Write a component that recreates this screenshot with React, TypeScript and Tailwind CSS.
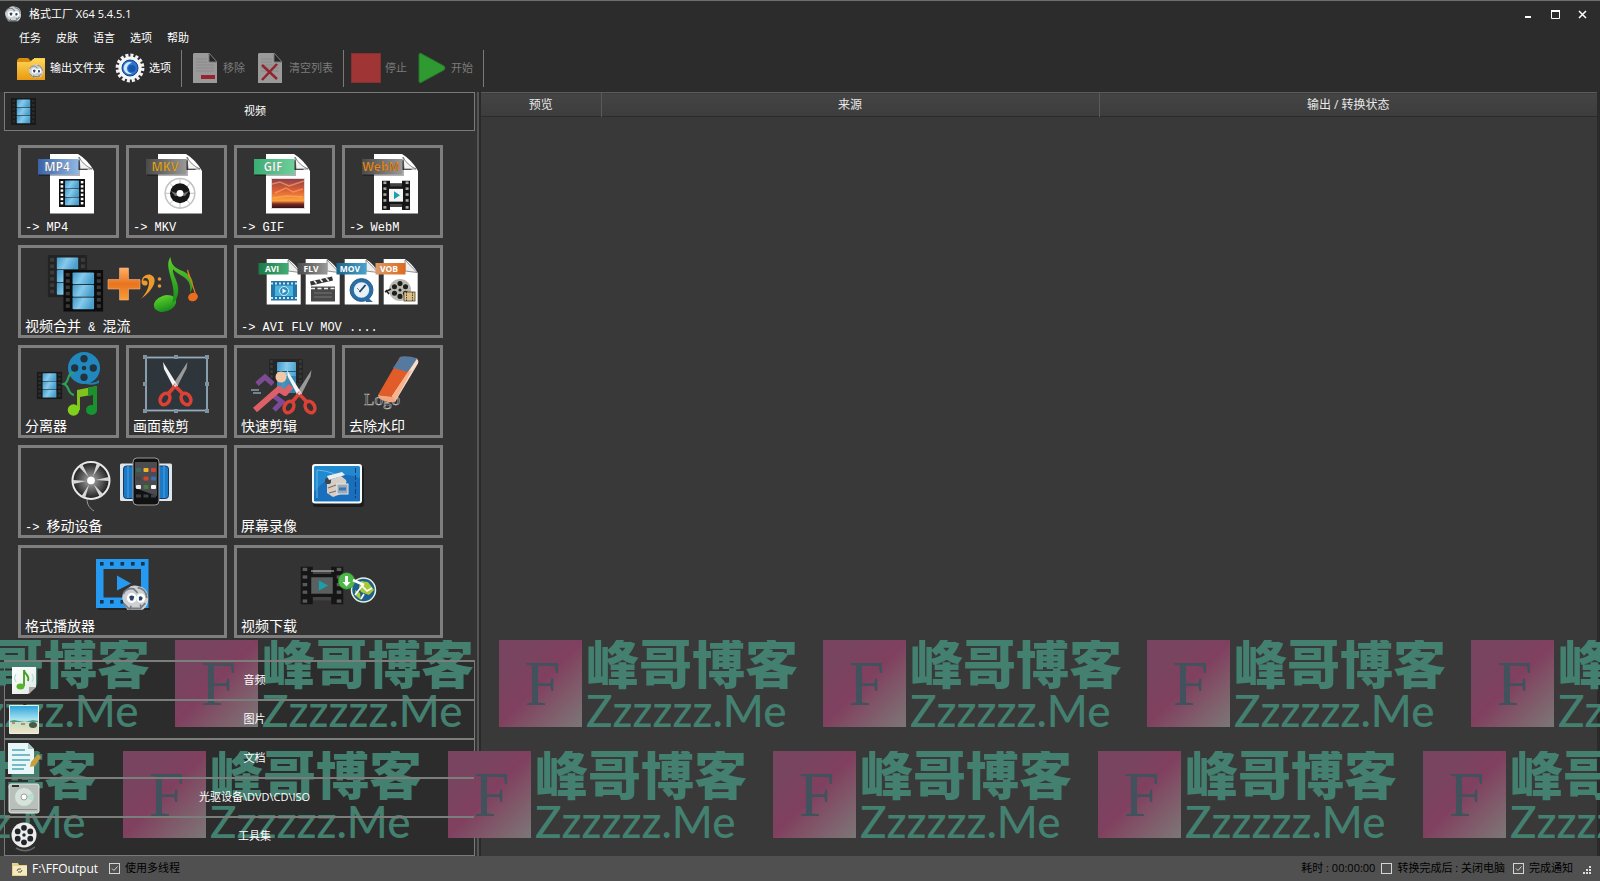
import React, { useState } from 'react';

interface BoxProps {
  x: number;
  y: number;
  w: number;
  h: number;
}

const Gradients: React.FC = () => (
  <svg width="0" height="0" className="absolute" aria-hidden="true">
    <defs>
      <linearGradient id="sky" x1="0" y1="0" x2="1" y2="0.3">
        <stop offset="0" stopColor="#3f98c8" />
        <stop offset="0.5" stopColor="#86caec" />
        <stop offset="1" stopColor="#4a9fcc" />
      </linearGradient>
      <linearGradient id="tagBlue"><stop offset="0" stopColor="#3a62a8" /><stop offset="1" stopColor="#8fb8e6" /></linearGradient>
      <linearGradient id="tagGray"><stop offset="0" stopColor="#4a4a4a" /><stop offset="1" stopColor="#999" /></linearGradient>
      <linearGradient id="tagGreen"><stop offset="0" stopColor="#3aae72" /><stop offset="1" stopColor="#6fcf9b" /></linearGradient>
      <linearGradient id="tagDeep"><stop offset="0" stopColor="#1c7a48" /><stop offset="1" stopColor="#43ad76" /></linearGradient>
      <linearGradient id="tagCyan"><stop offset="0" stopColor="#1d6389" /><stop offset="1" stopColor="#4aa3cf" /></linearGradient>
      <linearGradient id="tagOrange"><stop offset="0" stopColor="#d99a6a" /><stop offset="1" stopColor="#dd6a1e" /></linearGradient>
      <linearGradient id="sunset" x1="0" y1="0" x2="0" y2="1">
        <stop offset="0" stopColor="#8e3f4e" />
        <stop offset="0.4" stopColor="#dd5f38" />
        <stop offset="0.75" stopColor="#ffa23a" />
        <stop offset="0.86" stopColor="#7a2a22" />
        <stop offset="1" stopColor="#31131b" />
      </linearGradient>
      <linearGradient id="leaf" x1="0" y1="0" x2="0" y2="1"><stop offset="0" stopColor="#5bd02b" /><stop offset="1" stopColor="#178a1c" /></linearGradient>
      <linearGradient id="amber" x1="0" y1="0" x2="0" y2="1"><stop offset="0" stopColor="#ffb066" /><stop offset="0.5" stopColor="#e8741f" /><stop offset="1" stopColor="#f6a03a" /></linearGradient>
      <linearGradient id="paper" x1="0" y1="0" x2="1" y2="1"><stop offset="0" stopColor="#fff" /><stop offset="1" stopColor="#dfe8e4" /></linearGradient>
      <radialGradient id="steel"><stop offset="0" stopColor="#fff" /><stop offset="0.25" stopColor="#888" /><stop offset="1" stopColor="#1c1c1c" /></radialGradient>
      <linearGradient id="beach" x1="0" y1="0" x2="0" y2="1"><stop offset="0" stopColor="#2fa4dc" /><stop offset="0.5" stopColor="#a8e4ee" /><stop offset="0.65" stopColor="#c9dfc4" /><stop offset="1" stopColor="#efe3c4" /></linearGradient>
      <linearGradient id="gold" x1="0" y1="0" x2="0" y2="1"><stop offset="0" stopColor="#ffd657" /><stop offset="1" stopColor="#e89a10" /></linearGradient>
    </defs>
  </svg>
);

const Film: React.FC<BoxProps & { frame?: string; hole?: string }> = ({ x, y, w, h, frame = '#111', hole = '#555' }) => (
  <svg x={x} y={y} width={w} height={h} viewBox="0 0 26 28" preserveAspectRatio="none">
    <rect width="26" height="28" fill={frame} />
    {[2, 6.2, 10.4, 14.6, 18.8, 23].map(t => (
      <g key={t} fill={hole}>
        <rect x="1.6" y={t} width="2.6" height="2.4" />
        <rect x="21.8" y={t} width="2.6" height="2.4" />
      </g>
    ))}
    {[1.6, 10, 18.4].map(t => <rect key={t} x="6" y={t} width="14" height="7.9" rx="0.6" fill="url(#sky)" />)}
  </svg>
);

const PlayFrame: React.FC<BoxProps & { screen?: string; hole?: string }> = ({ x, y, w, h, screen = '#f4f4f4', hole = '#a8a8a8' }) => (
  <svg x={x} y={y} width={w} height={h} viewBox="0 0 28 30" preserveAspectRatio="none">
    <path d="M0 0h8v3h12V0h8v30h-8v-3H8v3H0z" fill="#151515" />
    <path d="M8 3h12v3H8zM8 24h12v3H8z" fill="#444" />
    {[1, 7, 13, 19, 26].map(t => (
      <g key={t} fill={hole}>
        <rect x="1.4" y={t} width="3" height="2.6" />
        <rect x="23.6" y={t} width="3" height="2.6" />
      </g>
    ))}
    <rect x="7" y="8.5" width="14" height="13" fill={screen} />
    <path d="M12 11l6 4-6 4z" fill="#19a0ab" />
  </svg>
);

const Reel: React.FC<{ cx: number; cy: number; r: number; body: string; hole: string; holes?: number }> = ({ cx, cy, r, body, hole, holes = 5 }) => (
  <g>
    <circle cx={cx} cy={cy} r={r} fill={body} />
    {Array.from({ length: holes }, (_, i) => {
      const a = (i * 2 * Math.PI) / holes - Math.PI / 2;
      return <circle key={i} cx={cx + Math.cos(a) * r * 0.58} cy={cy + Math.sin(a) * r * 0.58} r={r * 0.23} fill={hole} />;
    })}
    <circle cx={cx} cy={cy} r={r * 0.14} fill={hole} />
  </g>
);

const DocTag: React.FC<{ text: string; tag: string; color?: string; children?: React.ReactNode }> = ({ text, tag, color = '#fff', children }) => (
  <g>
    <path d="M29 6h28q10 6 16 17v42.500H29z" fill="#fff" />
    <path d="M57 12v10h10z" fill="#4a4a4a" />
    <path d="M58 9q4 8 13 12l-12 0z" fill="#f3f3f3" stroke="#555" strokeWidth="0.7" />
    <path d="M18 12h41v16H18z" fill="#000" opacity="0.3" />
    <rect x="17" y="11" width="40.500" height="15.500" fill={`url(#${tag})`} />
    <text x="36" y="23" textAnchor="middle" fontSize="12" fontWeight="700" fill={color} stroke="#222" strokeWidth="0.2">{text}</text>
    {children}
  </g>
);

const SmallDoc: React.FC<{ dx: number; text: string; tag: string; children: React.ReactNode }> = ({ dx, text, tag, children }) => (
  <g transform={`translate(${dx} 0)`}>
    <path d="M29.700 11h21q8 5 13 14v31.500h-34z" fill="#fff" />
    <path d="M51 12v11l12 1.500z" fill="#eee" stroke="#666" strokeWidth="0.700" />
    <rect x="21.500" y="15" width="30" height="11.500" fill={`url(#${tag})`} />
    <text x="35" y="24" textAnchor="middle" fontSize="8.500" fontWeight="700" fill="#fff">{text}</text>
    {children}
  </g>
);

const Scissors: React.FC<{ x: number; y: number }> = ({ x, y }) => (
  <g transform={`translate(${x} ${y})`}>
    <path d="M24.500 0l-1 6.500L13 27l-4-3z" fill="#9a9a9a" />
    <path d="M0 0l1 7 10 19 4-2z" fill="#f3f3f3" />
    <g fill="none" stroke="#dc4136" strokeWidth="3.600">
      <ellipse cx="2" cy="37" rx="4.500" ry="6" transform="rotate(28 2 37)" />
      <ellipse cx="23" cy="37" rx="4.500" ry="6" transform="rotate(-28 23 37)" />
      <path d="M5 32l7-8 8 8" />
    </g>
    <circle cx="12.300" cy="23.500" r="1.300" fill="#ddd" />
  </g>
);

const Ball: React.FC<{ cx: number; cy: number; r: number }> = ({ cx, cy, r }) => (
  <g transform={`translate(${cx} ${cy}) scale(${r / 10})`}>
    <path d="M-9 3a9 8 0 0 1 3-10Q-2-11 3-9q6 1 7 7 1 8-4 11H-6z" fill="#cdd1d3" />
    <path d="M-9-3q2-5 8-4l3 3M2-8q7 1 7 8M-9 4l4 4h9l4-4M-4 9l1-3M5 8l-1-3" stroke="#777c80" strokeWidth="1.300" fill="none" />
    <circle cx="-2.500" cy="0" r="3.800" fill="#fff" />
    <circle cx="4.500" cy="0" r="3.400" fill="#fff" />
    <path d="M-4.500-1q2-2 4 0l-1 3h-2zM3-1q2-1 3 1l-1 2H3z" fill="#2c4468" />
  </g>
);

const Mp4Art = () => (
  <DocTag text="MP4" tag="tagBlue"><Film x={38} y={31} w={26} h={28} hole="#fff" /></DocTag>
);

const MkvArt = () => (
  <DocTag text="MKV" tag="tagGray" color="#e0a526">
    <circle cx="51" cy="45.300" r="14.800" fill="#fff" stroke="#c4c4c4" strokeWidth="1.600" />
    <path d="M51 30.500V60M36 45.300h30M40.500 35L61.500 56M61.500 35L40.500 56" stroke="#c4c4c4" />
    <circle cx="51" cy="45.300" r="10" fill="#171717" />
    <path d="M42 43l5 2 4-2 4 2 5-2-4 5H46z" fill="#6f6f6f" />
    <circle cx="51" cy="45.300" r="3.400" fill="#fff" />
  </DocTag>
);

const GifArt = () => (
  <DocTag text="GIF" tag="tagGreen">
    <rect x="34" y="30" width="34" height="31" fill="#ddd" />
    <rect x="35" y="31" width="32" height="29" fill="url(#sunset)" />
    <path d="M35 36l8-2 9 4 15-5M38 45l11-5 7 4 10-3M36 50l14-2 16 1" stroke="#ffb35e" strokeWidth="1.400" fill="none" opacity="0.6" />
  </DocTag>
);

const WebmArt = () => (
  <DocTag text="WebM" tag="tagGray" color="#e58a22"><PlayFrame x={37} y={32.5} w={28} h={29.5} /></DocTag>
);

const MergeArt = () => (
  <g>
    <Film x={26.7} y={7} w={39.6} h={42.3} frame="#232323" hole="#3c3c3c" />
    <Film x={42.3} y={22} w={40} h={41.700} frame="#0c0c0c" hole="#3a3a3a" />
    <path d="M98.500 20h9v11.500H119v9.500h-11.500V52h-9V41H87v-9.500h11.500z" fill="url(#amber)" stroke="#f5b183" strokeWidth="0.600" />
    <path d="M121 36c-2-6 4-11 9-9 7 3 4 14-10 24 9-10 10-20 5-21-3 0-3 2-2 4 2 0 2 3-2 2z" fill="#eb9a2c" />
    <circle cx="124" cy="35" r="2.600" fill="#eb9a2c" />
    <circle cx="138.500" cy="31" r="1.800" fill="#eb9a2c" />
    <circle cx="138.500" cy="38" r="1.800" fill="#eb9a2c" />
    <ellipse cx="144" cy="55.500" rx="11.500" ry="8" transform="rotate(-18 144 55.500)" fill="url(#leaf)" />
    <path d="M149.500 9c-8 11 8 28 1.500 46l4-3c7-15-4-23-3-31 4 7 20 7 17 24 8-13-2-20-10-23-6-3-9-6-9.500-13z" fill="url(#leaf)" />
    <path d="M166.500 22l9 27M166.500 22l2 8" stroke="#e07a25" strokeWidth="1.200" fill="none" />
    <ellipse cx="172" cy="49" rx="5" ry="4.200" transform="rotate(-20 172 49)" fill="#ea6c1c" />
  </g>
);

const FormatsArt = () => (
  <g>
    <SmallDoc dx={0} text="AVI" tag="tagDeep">
      <rect x="34" y="33" width="26" height="19.500" fill="#2277a8" />
      <path d="M34 35.500h26M34 50h26" stroke="#cfe6f2" strokeWidth="2" strokeDasharray="2 2" />
      <rect x="38" y="37.500" width="18" height="10.500" fill="#49b4dd" />
      <circle cx="47" cy="43" r="4.500" fill="#2f8ec0" stroke="#cbeaf7" />
      <path d="M45.500 40.500l4 2.500-4 2.500z" fill="#fff" />
    </SmallDoc>
    <SmallDoc dx={39} text="FLV" tag="tagGray">
      <rect x="35" y="38.500" width="24" height="15" fill="#484848" />
      <path d="M34 33.500l22-5 1 4-22 5z" fill="#333" />
      <path d="M38 32.500l3 3.500M44 31l3 3.500M50 30l3 3M35 40.500h24" stroke="#eee" strokeWidth="1.600" strokeDasharray="4 2.500" />
      <path d="M38 45h18M38 49h18" stroke="#777" />
    </SmallDoc>
    <SmallDoc dx={78} text="MOV" tag="tagCyan">
      <circle cx="46.500" cy="42" r="9.500" fill="#e7f1f7" stroke="#286fa8" strokeWidth="3.600" />
      <circle cx="46.500" cy="42" r="11.500" fill="none" stroke="#173f6a" strokeWidth="0.800" />
      <path d="M44.500 44l6-7" stroke="#1d3c59" strokeWidth="1.800" />
      <path d="M42 40l3 3" stroke="#6f8796" />
      <path d="M51 48l7 6h-7z" fill="#2a6ca5" />
    </SmallDoc>
    <SmallDoc dx={117} text="VOB" tag="tagOrange">
      <Reel cx={46} cy={42} r={11} body="#b9b9b0" hole="#1e1e1e" holes={6} />
      <path d="M31 44l6-3M32 42l3 4" stroke="#222" strokeWidth="1.600" />
      <rect x="50" y="44" width="11" height="9" fill="#d8c08e" stroke="#554224" strokeWidth="0.800" />
      <path d="M52.500 44v9M58.500 44v9" stroke="#554224" strokeDasharray="1.500 1" />
    </SmallDoc>
  </g>
);

const SplitArt = () => (
  <g>
    <Film x={15.7} y={23.7} w={25.6} h={27.6} frame="#191919" hole="#2f2f2f" />
    <path d="M66 34q8 2 12-2v3q-6 3-13 1z" fill="#1c80b5" />
    <Reel cx={63} cy={20} r={16} body="#2287bd" hole="#1f3340" holes={4} />
    <path d="M53 25c-8 0-4 9-10 11 6 2 3 10 10 11" fill="none" stroke="#2ca35c" strokeWidth="2.200" />
    <path d="M56 42l20-4v8l-17 3v13h-3z" fill="#7fc31c" />
    <path d="M67 39.800l9-1.800v25h-4V47l-5 1z" fill="#1d8f2b" />
    <circle cx="52.500" cy="62" r="5.800" fill="#7fd11c" />
    <ellipse cx="70.500" cy="62" rx="5.500" ry="5" fill="#179430" />
  </g>
);

const CropArt = () => (
  <g>
    <rect x="17" y="9.500" width="61" height="53" fill="#2f363b" stroke="#93abbb" strokeWidth="1.800" />
    {[16, 47, 78].map(px => [9, 36, 63].map(py => (
      (px !== 47 || py !== 36) && <rect key={`${px}-${py}`} x={px - 2} y={py - 2} width="4" height="4" fill="#7d93a3" />
    )))}
    <Scissors x={34} y={14} />
  </g>
);

const QuickCutArt = () => (
  <g>
    <rect x="32" y="11" width="34" height="24" fill="#262626" />
    <path d="M34.500 12v22M63.500 12v22" stroke="#3a3a3a" strokeWidth="2.500" strokeDasharray="3 2" />
    <rect x="40" y="14" width="19" height="31" rx="1" fill="url(#sky)" />
    <path d="M40 23.500h19" stroke="#1e5b7c" />
    <path d="M40 28h19v17H40z" fill="#1f6f9c" opacity="0.6" />
    <path d="M20 36l8-7 8 7" fill="none" stroke="#7d4a94" strokeWidth="5" />
    <path d="M37 48l8 6-8 8" fill="none" stroke="#7d4a9b" strokeWidth="5" />
    <path d="M18 62l24-21 6 4 6-7" fill="none" stroke="#dd6068" strokeWidth="6" strokeLinejoin="round" />
    <circle cx="44" cy="29" r="5.500" fill="#f3c8a6" />
    <path d="M14 42h8M16 45h8" stroke="#bcd3e6" strokeWidth="1.200" />
    <Scissors x={50} y={22} />
  </g>
);

const EraserArt = () => (
  <g>
    <text x="19" y="57" fontSize="17" fill="#222" stroke="#bbb" strokeWidth="0.600" className="font-['Liberation_Serif',serif]">Logo</text>
    <path d="M55 9l17 1-24 39-15-2z" fill="#e25c2a" />
    <path d="M56 8.500q8-1 16 2L63 24l-15-4z" fill="#55799f" />
    <path d="M72 10.500q2 2 1 5L50 54l-3-6z" fill="#f5dccb" />
    <path d="M63 24l4-2-17 31.500-3-5z" fill="#f7b48f" />
    <path d="M33 47l15 2 2 5q-10 1-16-4z" fill="#f3a67d" />
  </g>
);

const MobileArt = () => (
  <g>
    <path d="M66 50c0 8 3 10 7 13" stroke="#999" fill="none" />
    <circle cx="70" cy="32.500" r="18.500" fill="url(#steel)" stroke="#e8e8e8" strokeWidth="2" />
    {[0, 60, 120, 180, 240, 300].map(a => (
      <path key={a} d="M70 28L68 14.500h4z" fill="#d6d6d6" transform={`rotate(${a + 25} 70 32.500)`} />
    ))}
    <circle cx="70" cy="32.500" r="3.800" fill="#fff" />
    <rect x="99" y="15.500" width="52" height="37.500" rx="1.500" fill="#dfe6ea" />
    <rect x="102.500" y="18" width="45" height="32.500" rx="3" fill="#1d79c4" stroke="#123a66" />
    <path d="M107 18v32M143 18v32" stroke="#2f8fd8" strokeWidth="2" />
    <rect x="112" y="10" width="26" height="47" rx="4" fill="#111" stroke="#9a9a9a" />
    <path d="M114 14h22v34l-22-8z" fill="#4a4c50" />
    {['#386a5c', '#e9b82a', '#d6403a', '#444', '#c84a2a', '#3a6fb4', '#eee', '#4b7a3f', '#fff'].map((c, i) => (
      <rect key={i} x={115 + (i % 3) * 7.5} y={20 + Math.floor(i / 3) * 8.5} width="5" height="4" rx="1" fill={c} />
    ))}
    <path d="M115 48h20" stroke="#3c444b" strokeWidth="3" strokeDasharray="5 2.500" />
  </g>
);

const RecordArt = () => (
  <g>
    <rect x="76" y="18" width="51" height="41" rx="3" fill="#1c1c1c" />
    <rect x="75" y="16" width="50" height="39.500" rx="3" fill="#f5fafd" />
    <rect x="77" y="18" width="46" height="35.500" rx="1.500" fill="#2389cf" />
    <path d="M77 44q20-24 46-14v23H77z" fill="#1a6fbd" />
    <path d="M80 22q18 1 30 12M80 50V22" stroke="#63b9ea" fill="none" />
    <path d="M118.500 20v30" stroke="#163e77" strokeDasharray="5 2" />
    <path d="M90 33l14-5 5 4v12l-13 5-6-4z" fill="#d6cfc6" />
    <rect x="88" y="30" width="6" height="6" rx="2" fill="#3b4651" />
    <path d="M90 28l15-4 3 3-16 5z" fill="#eee" />
    <rect x="100" y="36" width="11" height="10" fill="#9aa9b5" stroke="#e5e5e5" />
    <path d="M102 41h7" stroke="#3a77b5" strokeWidth="3" />
    <path d="M91 40l8-3M92 45l7-2" stroke="#8c6b60" strokeWidth="1.200" />
  </g>
);

const PlayerArt = () => (
  <g>
    <path d="M77 60h52v2H77z" fill="#222" />
    <rect x="75" y="11" width="52.500" height="49" fill="#269af0" />
    {[79, 89, 99.500, 110, 120].map(px => (
      <g key={px} fill="#173650">
        <rect x={px} y="14" width="3.600" height="3.600" />
        <rect x={px} y="52" width="3.600" height="3.600" />
      </g>
    ))}
    <rect x="82.500" y="21" width="37.500" height="28.500" fill="#333" />
    <path d="M96 27.500l14 8-14 7z" fill="#269af0" />
    <Ball cx={114} cy={50} r={13} />
  </g>
);

const DownloadArt = () => (
  <g>
    <PlayFrame x={63.5} y={18.5} w={43} h={38} screen="#59605f" hole="#5a5a5a" />
    <path d="M74 23h23" stroke="#ccc" />
    <circle cx="126.500" cy="42" r="12" fill="#1f5f8f" stroke="#e5f2dc" strokeWidth="1.500" />
    <path d="M124 33l7 1 6 8-5 5-8-3-2-5zM118 42l5 3 1 7-5-4z" fill="#a9c93a" />
    <path d="M118 47l7-9 5 5 5-3M124 51l3-5" stroke="#fff" strokeWidth="1.600" fill="none" />
    <circle cx="109.500" cy="33" r="8.300" fill="#4db848" stroke="#2e8a33" strokeWidth="0.600" />
    <path d="M108 28h3v6h2.500l-4 4.500-4-4.500h2.500z" fill="#fff" />
    <path d="M116 32l11 5" stroke="#fff" strokeWidth="2.500" />
  </g>
);

interface TileItem {
  id: string;
  latin?: string;
  cjk?: string;
  label?: React.ReactNode;
  wide?: boolean;
  art: React.ReactNode;
}

const tiles: TileItem[] = [
  { id: 'mp4', latin: '-> MP4', art: <Mp4Art /> },
  { id: 'mkv', latin: '-> MKV', art: <MkvArt /> },
  { id: 'gif', latin: '-> GIF', art: <GifArt /> },
  { id: 'webm', latin: '-> WebM', art: <WebmArt /> },
  { id: 'merge', label: <>视频合并<span className="text-xs leading-4"> &amp; </span>混流</>, wide: true, art: <MergeArt /> },
  { id: 'formats', latin: '-> AVI FLV MOV ....', wide: true, art: <FormatsArt /> },
  { id: 'split', cjk: '分离器', art: <SplitArt /> },
  { id: 'crop', cjk: '画面裁剪', art: <CropArt /> },
  { id: 'quick', cjk: '快速剪辑', art: <QuickCutArt /> },
  { id: 'logo', cjk: '去除水印', art: <EraserArt /> },
  { id: 'mobile', latin: '-> ', cjk: '移动设备', wide: true, art: <MobileArt /> },
  { id: 'record', cjk: '屏幕录像', wide: true, art: <RecordArt /> },
  { id: 'player', cjk: '格式播放器', wide: true, art: <PlayerArt /> },
  { id: 'download', cjk: '视频下载', wide: true, art: <DownloadArt /> },
];

const Tile: React.FC<{ item: TileItem }> = ({ item }) => (
  <button
    className={`flex h-[93px] flex-col border-3 border-[#7e7e7e] bg-[#333] text-left hover:border-[#aaa] ${item.wide ? 'col-span-2' : ''}`}
  >
    <svg className="h-[71px] w-full" viewBox={item.wide ? '0 0 203 71' : '0 0 95 71'} aria-hidden="true">{item.art}</svg>
    <span className="h-4 whitespace-pre px-1 font-['Liberation_Mono','Noto_Sans_CJK_SC',monospace] text-sm leading-4 text-white">
      {item.latin && <span className="text-xs leading-4">{item.latin}</span>}
      {item.cjk}
      {item.label}
    </span>
  </button>
);

const sections = [
  {
    label: '音频',
    icon: (
      <>
        <path d="M5 2h24v20l-8 7H5z" fill="url(#paper)" />
        <path d="M29 22h-7v7z" fill="#aaa" />
        <path d="M17 5v16M17 5c1 5 6 5 4 11" stroke="#3f9d22" strokeWidth="1.800" fill="none" />
        <ellipse cx="13.500" cy="21.500" rx="4" ry="3" fill="#57b32c" />
        <path d="M9 9q-3 4 0 8M25 9q3 4 0 8" stroke="#a9dfc8" fill="none" />
      </>
    ),
  },
  {
    label: '图片',
    icon: (
      <>
        <rect x="2" y="1" width="30" height="29" rx="1" fill="#eef0e8" />
        <rect x="3" y="2" width="28" height="27" fill="url(#beach)" />
        <path d="M3 17l4-1 5 1 6 1 8-2 5 1v1H3z" fill="#4f9a8c" />
        <path d="M5 19h3M14 20h4" stroke="#c66a4a" strokeWidth="1.500" />
        <ellipse cx="26" cy="21" rx="4" ry="3" fill="#4a5a4a" />
      </>
    ),
  },
  {
    label: '文档',
    icon: (
      <>
        <path d="M1 0h20l6 6v25H1z" fill="#e8f7f5" />
        <path d="M21 0v6h6z" fill="#a7c9c6" />
        <path d="M5 7h13M5 12h18M5 17h18M5 22h14M5 26h12" stroke="#4fa7ba" strokeWidth="1.300" />
        <path d="M31 11l3 3-6 9-5 1 1-5z" fill="#c6a03e" />
      </>
    ),
  },
  {
    label: '光驱设备\\DVD\\CD\\ISO',
    icon: (
      <>
        <rect x="2" y="2" width="30" height="29" rx="2" fill="#b9bfba" stroke="#e4e8e4" />
        <circle cx="17" cy="15" r="9.500" fill="#d7e2da" stroke="#b4c3ba" />
        <path d="M17 15l9-4a9.500 9.500 0 0 1 0 8z" fill="#b8e0cd" />
        <circle cx="17" cy="15" r="3" fill="#fff" stroke="#9d9d9d" />
        <path d="M5 4h7" stroke="#333" strokeWidth="2" />
        <path d="M4 27.500h26" stroke="#848984" />
      </>
    ),
  },
  {
    label: '工具集',
    icon: (
      <>
        <path d="M9 27q10 6 19-1" stroke="#666" strokeWidth="1.500" fill="none" />
        <Reel cx={17} cy={14} r={12.5} body="#ececec" hole="#20262a" holes={6} />
      </>
    ),
  },
];

const Watermark: React.FC = () => (
  <div className="flex h-[87px] shrink-0 overflow-hidden">
    <div className="flex w-[83px] shrink-0 items-center justify-center bg-linear-135 from-[#79445f] from-25% via-[#80405f] via-50% to-[#7b7777] pl-1 font-['Liberation_Serif',serif] text-[64px] text-[#41525c]">F</div>
    <div className="ml-1 whitespace-nowrap text-[#438070]">
      <div className="h-[46px] font-['Noto_Sans_CJK_SC',sans-serif] text-[53px] leading-[42px] font-black">峰哥博客</div>
      <div className="font-['Lato',sans-serif] text-[44px] leading-[48px] font-medium">Zzzzzz.Me</div>
    </div>
  </div>
);

const Check: React.FC<{ label: string; initial: boolean }> = ({ label, initial }) => {
  const [on, setOn] = useState(initial);
  return (
    <label className="flex items-center gap-[5px] text-black">
      <span className="relative flex">
        <input
          type="checkbox"
          checked={on}
          onChange={() => setOn(!on)}
          className="size-[11px] appearance-none border border-[#d5d5d5]"
        />
        {on && (
          <svg className="pointer-events-none absolute inset-0" width="11" height="11" viewBox="0 0 11 11" fill="none" stroke="#d5d5d5">
            <path d="M3 5.500l2 2 3.500-4" />
          </svg>
        )}
      </span>
      {label}
    </label>
  );
};

const DocIcon: React.FC<{ children: React.ReactNode }> = ({ children }) => (
  <svg width="26" height="32" viewBox="0 0 26 32" aria-hidden="true">
    <path d="M1 2l1-1h15l8 9v21H1z" fill="#9a9a9a" />
    <path d="M17 1v9h8z" fill="#252525" stroke="#777" />
    <path d="M4 7h11M4 10h11M4 13h18M4 16h18M4 19h18" stroke="#8a8a8a" />
    {children}
  </svg>
);

const Toolbar: React.FC = () => (
  <div className="flex h-[38px] items-center pl-[17px] text-[11px] whitespace-nowrap text-white">
    <button className="flex w-[98px] items-center gap-[3px]">
      <svg width="30" height="28" viewBox="0 0 30 28" aria-hidden="true">
        <path d="M0 6l2-2h9l3 3h14v17H0z" fill="#d98c12" />
        <path d="M17 4h11v14H17z" fill="#f3ca52" />
        <path d="M0 8h13l3-3h12v21H0z" fill="url(#gold)" />
        <Ball cx={19} cy={17} r={7} />
      </svg>
      输出文件夹
    </button>
    <button className="flex items-center gap-1">
      <svg width="30" height="30" viewBox="0 0 30 30" aria-hidden="true">
        <circle cx="15" cy="15" r="12.600" fill="none" stroke="#f1f1f1" strokeWidth="3.600" strokeDasharray="3 1.950" />
        <circle cx="15" cy="15" r="11.600" fill="#f5f5f5" />
        <circle cx="15" cy="15" r="8" fill="#2a76cf" stroke="#123f80" />
        <path d="M17 9.500a6 6 0 1 0 0 11 5 5 0 0 1-5-5q0-4 5-6z" fill="#cfe8fc" />
        <circle cx="17" cy="15.500" r="3.600" fill="#1755ac" />
      </svg>
      选项
    </button>
    <span className="mr-[10px] ml-[10px] h-[37px] w-px bg-[#7a7a7a]" />
    <button disabled className="flex items-center gap-[5px] text-[#7b7b7b]">
      <DocIcon><path d="M9 25h14" stroke="#97252f" strokeWidth="4" /></DocIcon>
      移除
    </button>
    <button disabled className="ml-3 flex items-center gap-[6px] text-[#7b7b7b]">
      <DocIcon><path d="M5 13l15 14M20 12L5 28" stroke="#93242d" strokeWidth="2.500" /></DocIcon>
      清空列表
    </button>
    <span className="mr-[7px] ml-[10px] h-[37px] w-px bg-[#7a7a7a]" />
    <button disabled className="flex items-center gap-1 text-[#7b7b7b]">
      <span className="size-[30px] border border-[#8a2f30] bg-[#a03536]" />
      停止
    </button>
    <button disabled className="ml-[11px] flex items-center gap-[5px] text-[#7b7b7b]">
      <svg width="28" height="32" viewBox="0 0 28 32" aria-hidden="true">
        <path d="M1 3q0-3 3-1l22 12q2 2 0 4L4 30q-3 2-3-1z" fill="#2f9a32" stroke="#25782a" />
      </svg>
      开始
    </button>
    <span className="ml-[10px] h-[37px] w-px bg-[#7a7a7a]" />
  </div>
);

const App: React.FC = () => {
  const menus = ['任务', '皮肤', '语言', '选项', '帮助'];

  return (
    <div className="relative flex min-h-screen flex-col overflow-hidden border-t border-[#6b706c] bg-[#2c2c2c] font-['Open_Sans','Noto_Sans_CJK_SC',sans-serif] text-[11px] text-white">
      <Gradients />

      {/* Title bar */}
      <header className="flex h-[26px] items-center pl-[5px]">
        <svg width="16" height="16" viewBox="0 0 16 16" aria-hidden="true"><Ball cx={8} cy={8} r={8} /></svg>
        <h1 className="ml-2 flex-1 text-[11px]">格式工厂 X64 5.4.5.1</h1>
        <button aria-label="Minimize" className="flex h-6 w-[27px] items-center justify-center">
          <svg width="9" height="9" viewBox="0 0 9 9"><path d="M1 7h6" stroke="#fff" strokeWidth="2" /></svg>
        </button>
        <button aria-label="Maximize" className="flex h-6 w-[27px] items-center justify-center">
          <svg width="9" height="9" viewBox="0 0 9 9"><path d="M.5 1v7.500h8V1" stroke="#fff" fill="none" /><path d="M0 1h9" stroke="#fff" strokeWidth="2" /></svg>
        </button>
        <button aria-label="Close" className="mr-1 flex h-6 w-[27px] items-center justify-center">
          <svg width="9" height="9" viewBox="0 0 9 9"><path d="M1 1l7 7M8 1L1 8" stroke="#fff" strokeWidth="1.500" /></svg>
        </button>
      </header>

      {/* Menu */}
      <nav className="flex h-[22px] items-center gap-[15px] pl-[19px]">
        {menus.map(menu => <button key={menu}>{menu}</button>)}
      </nav>

      <Toolbar />

      <main className="flex flex-1 pt-[5px]">
        {/* Left panel */}
        <aside className="flex w-[479px] shrink-0 flex-col border-r-2 border-[#555] bg-[#333] pr-[2px] pl-1">
          <button className="flex h-[39px] w-[471px] items-center border border-[#7a7a7a] bg-[#2c2c2c]">
            <svg className="ml-[6px] w-[25px]" height="27" viewBox="0 0 25 27" aria-hidden="true">
              <Film x={0} y={0} w={25} h={27} frame="#1a1a1a" hole="#2c2c2c" />
            </svg>
            <span className="flex-1 text-center">视频</span>
          </button>

          <div className="grid w-[439px] grid-cols-4 gap-[7px] pt-[14px] pl-[14px]">
            {tiles.map(item => <Tile key={item.id} item={item} />)}
          </div>

          <div className="mt-auto w-[471px] border-x border-b border-[#7a7a7a] bg-[#2c2c2c]">
            {sections.map(section => (
              <button key={section.label} className="relative z-20 flex h-[39px] w-full items-center border-t-2 border-[#7a7f7c]">
                <svg className="ml-[2px] w-[34px] shrink-0" height="32" viewBox="0 0 34 32" aria-hidden="true">{section.icon}</svg>
                <span className="-ml-[6px] flex-1 text-center">{section.label}</span>
              </button>
            ))}
          </div>
        </aside>

        {/* Task list */}
        <section className="flex-1 border-r-3 border-l-2 border-r-[#2a2a2a] border-l-[#2a2a2a] bg-[#393939]">
          <table className="w-full table-fixed border-collapse text-xs text-[#e8e8e8]">
            <thead>
              <tr className="h-6 border-t border-b border-t-[#5c5c5c] border-b-[#2b2b2b] bg-linear-to-b from-[#444] to-[#3d3d3d]">
                <th className="w-[120px] border-r border-[#5a5a5a] p-0 font-normal">预览</th>
                <th className="border-r border-[#5a5a5a] p-0 font-normal">来源</th>
                <th className="p-0 font-normal">输出 / 转换状态</th>
              </tr>
            </thead>
          </table>
        </section>
      </main>

      {/* Status bar */}
      <footer className="flex h-[25px] items-center bg-[#505050] pr-2 pl-3">
        <svg width="16" height="14" viewBox="0 0 16 14" aria-hidden="true">
          <path d="M0 1h6l1 2h8v11H0z" fill="#e4cf8d" />
          <path d="M1 4h14v9H1z" fill="#f4e9bf" />
          <path d="M5 9q0-3 4-2M10 8q0 3-4 2" stroke="#5d5a45" fill="none" />
        </svg>
        <button className="mr-[11px] ml-1 text-xs">F:\FFOutput</button>
        <Check label="使用多线程" initial={true} />
        <span className="ml-auto mr-[6px] text-black">耗时 : 00:00:00</span>
        <Check label="转换完成后 : 关闭电脑" initial={false} />
        <span className="w-2" />
        <Check label="完成通知" initial={true} />
        <svg className="mt-1 ml-[10px]" width="9" height="9" viewBox="0 0 9 9" fill="#ddd" aria-hidden="true">
          <path d="M6 0h2v2H6zM3 3h2v2H3zM6 3h2v2H6zM0 6h2v2H0zM3 6h2v2H3zM6 6h2v2H6z" />
        </svg>
      </footer>

      {/* Watermark rows lie over the panels */}
      <div className="pointer-events-none absolute inset-x-0 bottom-[154px] z-10 flex overflow-hidden">
        <div className="-ml-[149px] grid auto-cols-[324px] grid-flow-col">{[0, 1, 2, 3, 4, 5].map(i => <Watermark key={i} />)}</div>
      </div>
      <div className="pointer-events-none absolute inset-x-0 bottom-[43px] z-10 flex overflow-hidden">
        <div className="-ml-[202px] grid auto-cols-[325px] grid-flow-col">{[0, 1, 2, 3, 4, 5].map(i => <Watermark key={i} />)}</div>
      </div>
    </div>
  );
};

export default App;
